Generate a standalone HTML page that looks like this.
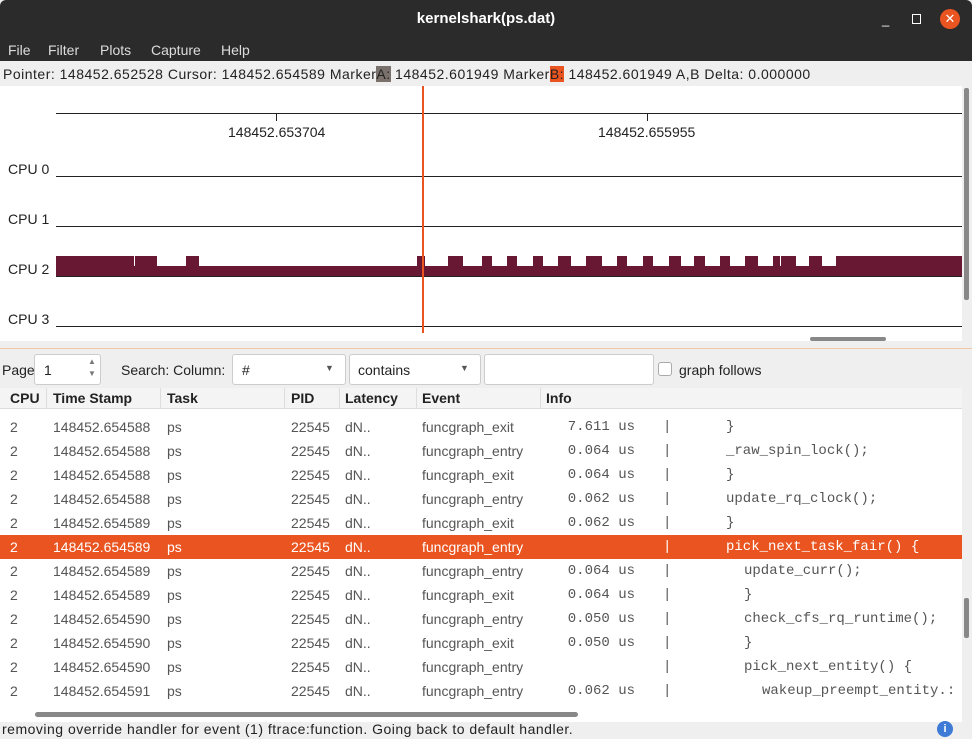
<!DOCTYPE html>
<html><head><meta charset="utf-8"><style>
*{margin:0;padding:0;box-sizing:border-box}
body{width:972px;height:739px;overflow:hidden;background:#efefef;font-family:"Liberation Sans",sans-serif;font-size:14px;color:#222;position:relative}
.a{position:absolute;white-space:nowrap}
.m{font-family:"Liberation Mono",monospace;font-size:14px}
</style></head><body>
<div class="a" style="left:0;top:0;width:972px;height:38px;background:#2b2b2b;border-radius:6px 6px 0 0"></div>
<div class="a" style="left:0;top:10px;width:972px;text-align:center;color:#fff;font-weight:bold;font-size:15px">kernelshark(ps.dat)</div>
<div class="a" style="left:882px;top:12px;color:#fff;font-size:13px">_</div>
<div class="a" style="left:912px;top:14px;width:9px;height:10px;border:1.5px solid #fff"></div>
<div class="a" style="left:940px;top:9px;width:20px;height:20px;border-radius:50%;background:#e95420;color:#fff;text-align:center;font-size:13px;line-height:20px">✕</div>
<div class="a" style="left:0;top:38px;width:972px;height:23px;background:#2b2b2b"></div>
<div class="a" style="left:8px;top:42px;color:#ddd">File</div>
<div class="a" style="left:48px;top:42px;color:#ddd">Filter</div>
<div class="a" style="left:100px;top:42px;color:#ddd">Plots</div>
<div class="a" style="left:151px;top:42px;color:#ddd">Capture</div>
<div class="a" style="left:221px;top:42px;color:#ddd">Help</div>
<div class="a" style="left:3px;top:66px;font-size:14px;letter-spacing:0.5px">Pointer: 148452.652528 Cursor: 148452.654589 Marker<span style="background:#7a716c">A:</span> 148452.601949 Marker<span style="background:#e95420">B:</span> 148452.601949 A,B Delta: 0.000000</div>
<div class="a" style="left:0;top:86px;width:962px;height:255px;background:#fff"></div>
<div class="a" style="left:964px;top:88px;width:5px;height:212px;background:#888;border-radius:2px"></div>
<div class="a" style="left:810px;top:337px;width:76px;height:4px;background:#888;border-radius:2px"></div>
<div class="a" style="left:0;top:348px;width:972px;height:1px;background:#f0c8a8"></div>
<div class="a" style="left:56px;top:113px;width:906px;height:1px;background:#222"></div>
<div class="a" style="left:276px;top:113px;width:1px;height:8px;background:#222"></div>
<div class="a" style="left:647px;top:113px;width:1px;height:8px;background:#222"></div>
<div class="a" style="left:228px;top:124px">148452.653704</div>
<div class="a" style="left:598px;top:124px">148452.655955</div>
<div class="a" style="left:8px;top:161px">CPU 0</div>
<div class="a" style="left:8px;top:211px">CPU 1</div>
<div class="a" style="left:8px;top:261px">CPU 2</div>
<div class="a" style="left:8px;top:311px">CPU 3</div>
<div class="a" style="left:56px;top:176px;width:906px;height:1px;background:#222"></div>
<div class="a" style="left:56px;top:226px;width:906px;height:1px;background:#222"></div>
<div class="a" style="left:56px;top:326px;width:906px;height:1px;background:#222"></div>
<div class="a" style="left:56px;top:266px;width:906px;height:10px;background:#681832"></div>
<div class="a" style="left:56px;top:276px;width:906px;height:1px;background:#222"></div>
<svg class="a" style="left:0;top:0" width="972" height="300"><g fill="#681832">
<rect x="56" y="256" width="78" height="10"/><rect x="135" y="256" width="22" height="10"/><rect x="186" y="256" width="13" height="10"/>
<rect x="417" y="256" width="8" height="10"/><rect x="448" y="256" width="15" height="10"/><rect x="482" y="256" width="10" height="10"/><rect x="507" y="256" width="10" height="10"/><rect x="533" y="256" width="10" height="10"/><rect x="558" y="256" width="13" height="10"/><rect x="586" y="256" width="16" height="10"/><rect x="617" y="256" width="10" height="10"/><rect x="643" y="256" width="10" height="10"/><rect x="669" y="256" width="12" height="10"/><rect x="694" y="256" width="11" height="10"/><rect x="720" y="256" width="10" height="10"/><rect x="745" y="256" width="13" height="10"/><rect x="773" y="256" width="7" height="10"/><rect x="781" y="256" width="15" height="10"/><rect x="809" y="256" width="13" height="10"/><rect x="836" y="256" width="126" height="10"/></g></svg>
<div class="a" style="left:422px;top:86px;width:1.5px;height:247px;background:#e95420"></div>
<div class="a" style="left:2px;top:362px">Page</div>
<div class="a" style="left:34px;top:354px;width:67px;height:31px;background:#fff;border:1px solid #ccc;border-radius:3px"></div>
<div class="a" style="left:44px;top:362px">1</div>
<div class="a" style="left:88px;top:356px;font-size:8px;color:#777;line-height:12px">▲<br>▼</div>
<div class="a" style="left:121px;top:362px">Search: Column:</div>
<div class="a" style="left:232px;top:354px;width:114px;height:31px;background:#fff;border:1px solid #ccc;border-radius:3px"></div>
<div class="a" style="left:242px;top:362px">#</div><div class="a" style="left:325px;top:363px;font-size:9px;color:#555">▼</div>
<div class="a" style="left:349px;top:354px;width:132px;height:31px;background:#fff;border:1px solid #ccc;border-radius:3px"></div>
<div class="a" style="left:358px;top:362px">contains</div><div class="a" style="left:460px;top:363px;font-size:9px;color:#555">▼</div>
<div class="a" style="left:484px;top:354px;width:170px;height:31px;background:#fff;border:1px solid #ccc;border-radius:3px"></div>
<div class="a" style="left:658px;top:362px;width:14px;height:14px;background:#fff;border:1px solid #aaa;border-radius:3px"></div>
<div class="a" style="left:679px;top:362px">graph follows</div>
<div class="a" style="left:0;top:388px;width:962px;height:334px;background:#fff"></div>
<div class="a" style="left:0;top:388px;width:962px;height:21px;background:#f4f4f4;border-bottom:1px solid #ddd"></div>
<div class="a" style="top:390px;left:10px;font-weight:bold">CPU</div>
<div class="a" style="top:390px;left:53px;font-weight:bold">Time Stamp</div>
<div class="a" style="top:390px;left:167px;font-weight:bold">Task</div>
<div class="a" style="top:390px;left:291px;font-weight:bold">PID</div>
<div class="a" style="top:390px;left:345px;font-weight:bold">Latency</div>
<div class="a" style="top:390px;left:422px;font-weight:bold">Event</div>
<div class="a" style="top:390px;left:546px;font-weight:bold">Info</div>
<div class="a" style="left:46px;top:388px;width:1px;height:20px;background:#ddd"></div><div class="a" style="left:160px;top:388px;width:1px;height:20px;background:#ddd"></div><div class="a" style="left:284px;top:388px;width:1px;height:20px;background:#ddd"></div><div class="a" style="left:339px;top:388px;width:1px;height:20px;background:#ddd"></div><div class="a" style="left:416px;top:388px;width:1px;height:20px;background:#ddd"></div><div class="a" style="left:540px;top:388px;width:1px;height:20px;background:#ddd"></div>
<div class="a" style="left:0;top:535px;width:962px;height:24px;background:#e95420"></div>
<div id="rows"></div>
<script>
var d=[["588","exit","7.611 us","}",0],["588","entry","0.064 us","_raw_spin_lock();",0],["588","exit","0.064 us","}",0],["588","entry","0.062 us","update_rq_clock();",0],["589","exit","0.062 us","}",0],["589","entry","","pick_next_task_fair() {",0],["589","entry","0.064 us","update_curr();",1],["589","exit","0.064 us","}",1],["590","entry","0.050 us","check_cfs_rq_runtime();",1],["590","exit","0.050 us","}",1],["590","entry","","pick_next_entity() {",1],["591","entry","0.062 us","wakeup_preempt_entity.:",2]];
var h="";d.forEach(function(r,i){var t=419+i*24,c=i==5?"color:#fff;":"color:#555;";
h+='<div class="a" style="'+c+'top:'+t+'px;left:10px">2</div><div class="a" style="'+c+'top:'+t+'px;left:53px">148452.654'+r[0]+'</div><div class="a" style="'+c+'top:'+t+'px;left:167px">ps</div><div class="a" style="'+c+'top:'+t+'px;left:291px">22545</div><div class="a" style="'+c+'top:'+t+'px;left:345px">dN..</div><div class="a" style="'+c+'top:'+t+'px;left:422px">funcgraph_'+r[1]+'</div><div class="a m" style="'+c+'top:'+t+'px;left:480px;width:155px;text-align:right">'+r[2]+'</div><div class="a m" style="'+c+'top:'+t+'px;left:663px">|</div><div class="a m" style="'+c+'top:'+t+'px;left:'+(726+18*r[4])+'px">'+r[3]+'</div>';});
document.getElementById("rows").innerHTML=h;
</script>
<div class="a" style="left:35px;top:712px;width:543px;height:5px;background:#888;border-radius:3px"></div>
<div class="a" style="left:964px;top:598px;width:5px;height:40px;background:#888;border-radius:2px"></div>
<div class="a" style="left:2px;top:721px;font-size:14px;letter-spacing:0.5px">removing override handler for event (1) ftrace:function. Going back to default handler.</div>
<div class="a" style="left:937px;top:721px;width:16px;height:16px;border-radius:50%;background:#3d7bd6;color:#fff;font-size:11px;text-align:center;line-height:16px;font-weight:bold">i</div>
</body></html>
